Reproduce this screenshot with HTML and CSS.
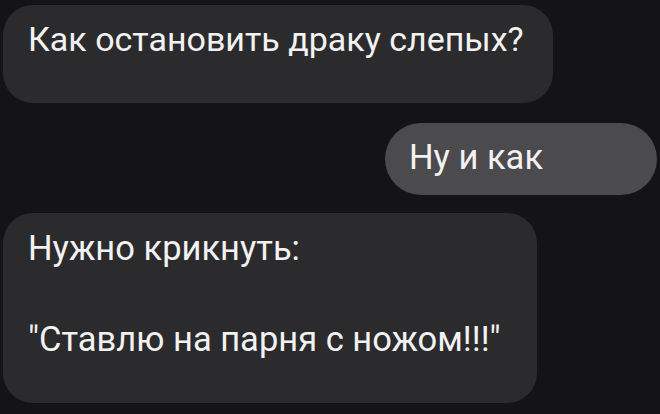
FILE: index.html
```html
<!DOCTYPE html>
<html lang="ru">
<head>
<meta charset="utf-8">
<link rel="stylesheet" href="styles.css">
</head>
<body>
<div class="chat">
  <div class="bubble in first"><p>Как остановить драку слепых?</p></div>
  <div class="bubble out"><p>Ну и как</p></div>
  <div class="bubble in third"><p>Нужно крикнуть:</p><p>&nbsp;</p><p>"Ставлю на парня с ножом!!!"</p></div>
</div>
</body>
</html>
```
FILE: styles.css
```css
html, body {
  margin: 0;
  padding: 0;
  background: #141416;
}
body {
  width: 660px;
  height: 414px;
  overflow: hidden;
  font-family: Roboto, "Noto Sans", sans-serif;
  color: #f2f2f2;
}
.chat {
  display: flex;
  flex-direction: column;
  padding-top: 5px;
}
.bubble p {
  margin: 0;
  font-size: 34.5px;
  line-height: 45.5px;
  white-space: nowrap;
}
.bubble.in {
  background: #2b2b2d;
  margin-left: 3px;
  border-radius: 30px;
  padding-left: 25px;
  box-sizing: border-box;
}
.first {
  width: 550px;
  height: 98px;
  padding-top: 12px;
}
.first p {
  font-size: 34px;
}
.out {
  align-self: flex-start;
  margin-left: 385px;
  margin-top: 20px;
  width: 272px;
  height: 72px;
  box-sizing: border-box;
  border-radius: 36px;
  background: #4b4b4d;
  padding-left: 24px;
  padding-top: 12px;
}
.out p {
  line-height: 45px;
}
.third {
  margin-top: 18px;
  width: 534px;
  height: 190px;
  padding-top: 13px;
  background: #2c2d2f;
}
```
